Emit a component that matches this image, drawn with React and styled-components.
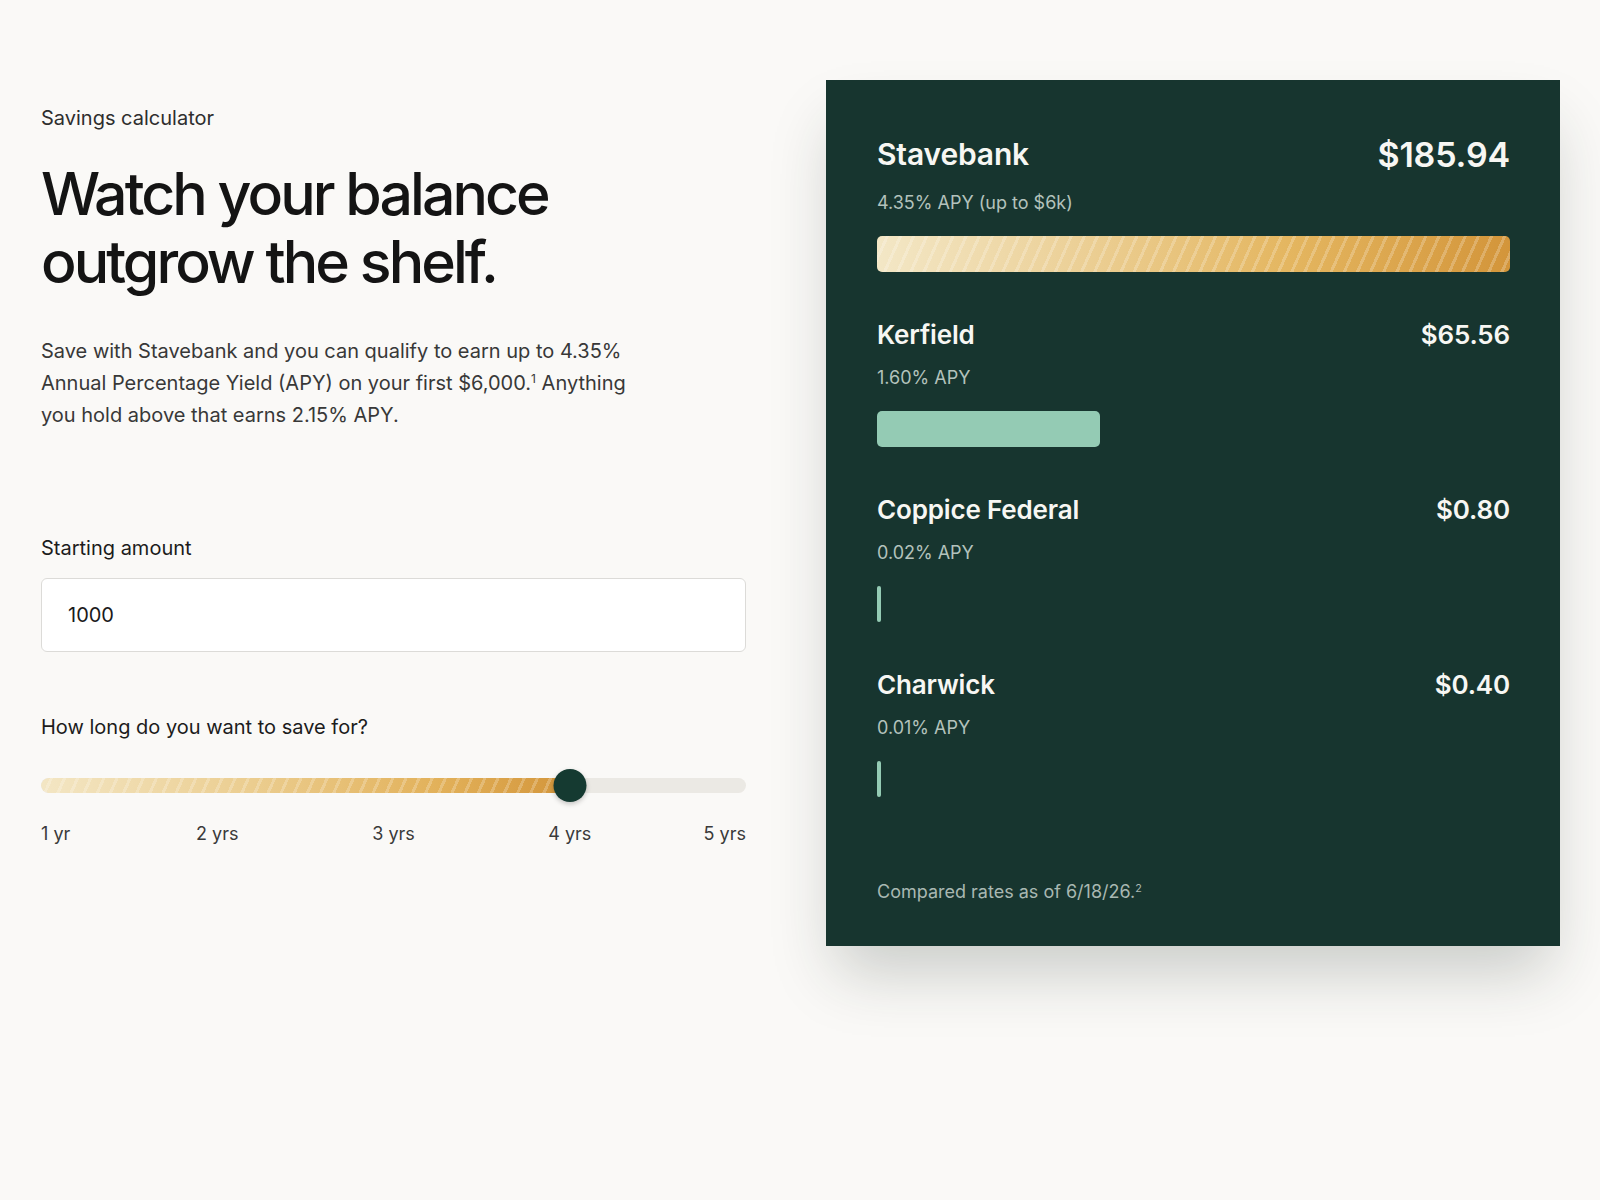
import React, { useState } from "react";
import styled, { createGlobalStyle } from "styled-components";

const GlobalStyle = createGlobalStyle`
  * { box-sizing: border-box; }
  body {
    margin: 0;
    background: #faf9f7;
    font-family: Inter, "Noto Sans", sans-serif;
    color: #161616;
  }
  sup { font-size: 0.6em; line-height: 0; vertical-align: 0.55em; }
`;

const STRIPES =
  "repeating-linear-gradient(114deg, rgba(255,255,255,0) 0 8px, rgba(255,255,255,0.22) 8px 11px, rgba(255,255,255,0) 11px 12px)";
const GOLD = "linear-gradient(90deg, #f3e7c6 0%, #ecd199 30%, #e4b660 65%, #d3953a 100%)";

const banks = [
  { name: "Stavebank", rate: "4.35% APY (up to $6k)", amount: 185.94, lead: true },
  { name: "Kerfield", rate: "1.60% APY", amount: 65.56 },
  { name: "Coppice Federal", rate: "0.02% APY", amount: 0.8 },
  { name: "Charwick", rate: "0.01% APY", amount: 0.4 },
];

const ticks = ["1 yr", "2 yrs", "3 yrs", "4 yrs", "5 yrs"];

const Page = styled.main`
  min-height: 100vh;
  padding: 80px 40px 0 41px;
  display: grid;
  grid-template-columns: 705px 734px;
  column-gap: 80px;
  align-items: start;
`;

const Intro = styled.section`
  padding-top: 24px;
  display: flex;
  flex-direction: column;
`;

const Eyebrow = styled.div`
  font-size: 20px;
  line-height: 28px;
  color: #2e2e2e;
`;

const Title = styled.h1`
  margin: 28px 0 0;
  font-size: 59px;
  line-height: 68px;
  font-weight: 500;
  letter-spacing: -0.05em;
  color: #141414;
`;

const Lead = styled.p`
  margin: 39px 0 0;
  max-width: 600px;
  font-size: 20px;
  line-height: 32px;
  color: #383838;
`;

const Label = styled.label`
  display: block;
  margin-top: ${(p) => p.$gap}px;
  font-size: 20px;
  line-height: 28px;
  color: #1c1c1c;
`;

const AmountInput = styled.input`
  margin-top: 16px;
  width: 100%;
  height: 74px;
  padding: 0 26px;
  border: 1px solid #dcdbd8;
  border-radius: 6px;
  background: #fff;
  font-family: inherit;
  font-size: 20px;
  color: #1a1a1a;
  outline: none;
`;

const Slider = styled.div`
  position: relative;
  margin-top: 28px;
  height: 33px;
  display: flex;
  align-items: center;
`;

const Track = styled.div`
  position: relative;
  width: 100%;
  height: 15px;
  border-radius: 8px;
  background: #ebe9e4;
  overflow: hidden;
`;

const Fill = styled.div`
  height: 100%;
  border-radius: 8px 0 0 8px;
  background: ${STRIPES}, linear-gradient(90deg, #f3e6c4 0%, #ebcd8f 40%, #e2b15a 75%, #d3953a 100%);
`;

const Thumb = styled.div`
  position: absolute;
  top: 0;
  width: 33px;
  height: 33px;
  border-radius: 50%;
  background: #153a31;
  box-shadow: 0 2px 5px rgba(0, 0, 0, 0.22);
  transform: translateX(-50%);
`;

const Ticks = styled.div`
  margin-top: 20px;
  display: flex;
  justify-content: space-between;
`;

const Tick = styled.span`
  width: 0;
  display: flex;
  justify-content: ${(p) => p.$align};
  white-space: nowrap;
  font-size: 18px;
  line-height: 24px;
  color: #3a3a3a;
`;

const Panel = styled.aside`
  background: #17352f;
  padding: 56px 50px 41px 51px;
  box-shadow: 0 36px 60px -10px rgba(30, 45, 35, 0.22);
  color: #fff;
  display: flex;
  flex-direction: column;
`;

const List = styled.ul`
  list-style: none;
  margin: 0;
  padding: 0;
  display: flex;
  flex-direction: column;
  gap: 44px;
`;

const Row = styled.li`
  display: flex;
  flex-direction: column;
`;

const Head = styled.div`
  display: flex;
  justify-content: space-between;
  align-items: center;
  height: 36px;
  font-weight: 600;
  letter-spacing: -0.01em;
  color: #f7f7f3;
`;

const Name = styled.span`
  font-size: ${(p) => (p.$lead ? 30 : 26)}px;
`;

const Amount = styled.span`
  font-size: ${(p) => (p.$lead ? 34 : 26)}px;
`;

const Rate = styled.div`
  margin-top: ${(p) => (p.$lead ? 18 : 13)}px;
  font-size: 18px;
  line-height: 26px;
  color: #b3c2bc;
`;

const Bar = styled.div`
  margin-top: 20px;
  height: 36px;
  min-width: 4px;
  border-radius: 5px;
  background: ${(p) => (p.$gold ? `${STRIPES}, ${GOLD}` : "#94cbb4")};
`;

const Note = styled.p`
  margin: 82px 0 0;
  font-size: 18px;
  line-height: 26px;
  color: #a9b8b2;
`;

export default function App() {
  const [amount, setAmount] = useState("1000");
  const years = 4;
  const pct = ((years - 1) / (ticks.length - 1)) * 100;
  const top = Math.max(...banks.map((b) => b.amount));

  return (
    <>
      <GlobalStyle />
      <Page>
        <Intro>
          <Eyebrow>Savings calculator</Eyebrow>
          <Title>
            Watch your balance
            <br />
            outgrow the shelf.
          </Title>
          <Lead>
            Save with Stavebank and you can qualify to earn up to 4.35% Annual Percentage Yield (APY) on
            your first $6,000.<sup>1</sup> Anything you hold above that earns 2.15% APY.
          </Lead>

          <Label $gap={103} htmlFor="amount">Starting amount</Label>
          <AmountInput id="amount" value={amount} onChange={(e) => setAmount(e.target.value)} />

          <Label $gap={61}>How long do you want to save for?</Label>
          <Slider>
            <Track>
              <Fill style={{ width: `${pct}%` }} />
            </Track>
            <Thumb style={{ left: `${pct}%` }} />
          </Slider>
          <Ticks>
            {ticks.map((t, i) => (
              <Tick key={t} $align={i === 0 ? "flex-start" : i === ticks.length - 1 ? "flex-end" : "center"}>
                {t}
              </Tick>
            ))}
          </Ticks>
        </Intro>

        <Panel>
          <List>
            {banks.map((b) => (
              <Row key={b.name}>
                <Head>
                  <Name $lead={b.lead}>{b.name}</Name>
                  <Amount $lead={b.lead}>${b.amount.toFixed(2)}</Amount>
                </Head>
                <Rate $lead={b.lead}>{b.rate}</Rate>
                <Bar $gold={b.lead} style={{ width: `${(b.amount / top) * 100}%` }} />
              </Row>
            ))}
          </List>
          <Note>
            Compared rates as of 6/18/26.<sup>2</sup>
          </Note>
        </Panel>
      </Page>
    </>
  );
}
